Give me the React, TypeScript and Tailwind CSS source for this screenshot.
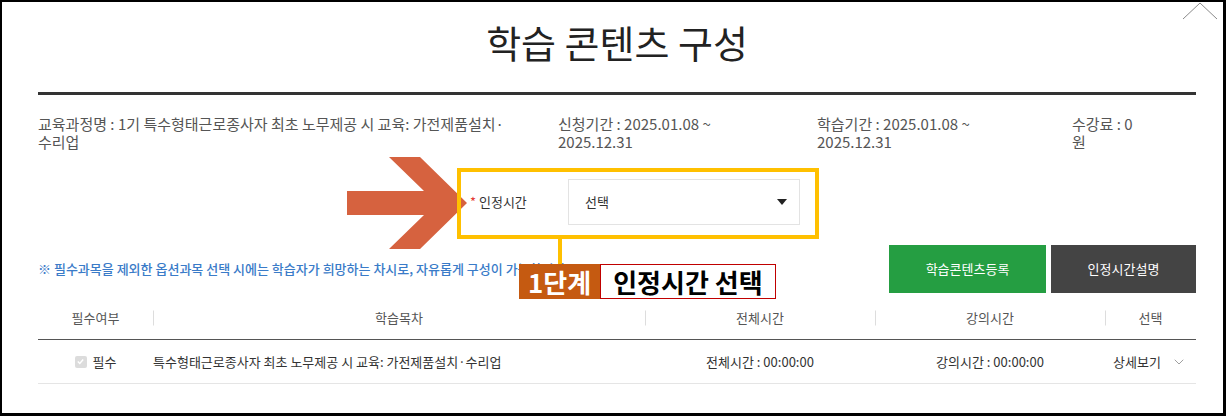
import { ChevronDown } from 'lucide-react';

const columns = [
  { label: '필수여부', width: 'w-[115px]' },
  { label: '학습목차', width: 'w-[492px]' },
  { label: '전체시간', width: 'w-[230px]' },
  { label: '강의시간', width: 'w-[230px]' },
  { label: '선택', width: 'flex-1' },
];

function Annotation() {
  return (
    <>
      {/* arrow */}
      <svg className="absolute left-[343px] top-[153px]" width="126" height="96" viewBox="343 153 126 96">
        <polygon
          points="345,189 422,189 387,155 418,155 465,201 418,247 387,247 422,213 345,213"
          fill="#d6623f"
        />
      </svg>
      {/* highlight box */}
      <div className="absolute left-[455px] top-[166px] w-[362px] h-[71px] border-[4px] border-[#ffc000]" />
      <div className="absolute left-[556px] top-[237px] w-[4px] h-[25px] bg-[#ffc000]" />
      {/* step label */}
      <div className="absolute left-[517px] top-[262px] flex h-[35px] font-bold text-[26px] leading-none">
        <div className="flex items-center bg-[#c55a11] px-[9px] text-white">1단계</div>
        <div className="flex items-center border border-[#c00000] bg-white px-[12px] text-black">인정시간 선택</div>
      </div>
    </>
  );
}

export default function App() {
  return (
    <div
      className="relative w-[1226px] h-[416px] overflow-hidden bg-white border-l-2 border-t-2 border-r-[3px] border-b-[3px] border-black"
      style={{ fontFamily: '"Noto Sans CJK KR", "Noto Sans", sans-serif' }}
    >
      {/* close icon, cut off */}
      <svg className="absolute right-[3px] top-0" width="40" height="20" viewBox="0 0 40 20">
        <polyline points="3,17 20,1 37,17" fill="none" stroke="#8a8a8a" strokeWidth="1" />
      </svg>

      <div className="pl-[36px] pr-[27px]">
        <h1 className="pt-[15px] text-center text-[38px] leading-[50px] font-normal text-[#222]">학습 콘텐츠 구성</h1>
        <div className="mt-[25px] h-[3px] bg-[#333]" />

        {/* course info */}
        <div className="mt-[20px] flex text-[15px] leading-[18px] text-[#555]">
          <div className="w-[520px] pr-[48px]">교육과정명 : 1기 특수형태근로종사자 최초 노무제공 시 교육: 가전제품설치·수리업</div>
          <div className="w-[259px] pr-[40px]">신청기간 : 2025.01.08 ~ 2025.12.31</div>
          <div className="w-[255px] pr-[40px]">학습기간 : 2025.01.08 ~ 2025.12.31</div>
          <div className="w-[72px]">수강료 : 0 원</div>
        </div>

        {/* select */}
        <div className="mt-[28px] flex items-center pl-[432px]">
          <div className="w-[98px] text-[13px] text-[#333]">
            <span className="text-[#e53935]">*</span> 인정시간
          </div>
          <div className="flex h-[46px] w-[232px] items-center justify-between border border-[#e3e3e3] pl-[16px] pr-[12px] text-[13px] text-[#333]">
            <span>선택</span>
            <svg width="10" height="6" viewBox="0 0 10 6">
              <polygon points="0,0 10,0 5,6" fill="#222" />
            </svg>
          </div>
        </div>

        {/* notice + buttons */}
        <div className="mt-[20px] flex items-center justify-between">
          <p className="text-[13px] font-medium text-[#3a7bc8]">
            ※ 필수과목을 제외한 옵션과목 선택 시에는 학습자가 희망하는 차시로, 자유롭게 구성이 가능합니다.
          </p>
          <div className="flex gap-[5px]">
            <button className="h-[48px] w-[157px] bg-[#259e42] text-[13px] text-white">학습콘텐츠등록</button>
            <button className="h-[48px] w-[145px] bg-[#444] text-[13px] text-white">인정시간설명</button>
          </div>
        </div>

        {/* table */}
        <div className="mt-[4px]">
          <div className="flex h-[43px] items-center border-b border-[#555] text-[13px] text-[#555]">
            {columns.map((c, i) => (
              <div key={c.label} className={`${c.width} relative text-center`}>
                {i > 0 && <span className="absolute left-0 top-1/2 h-[15px] w-px -translate-y-1/2 bg-[#ddd]" />}
                {c.label}
              </div>
            ))}
          </div>
          <div className="flex h-[44px] items-center border-b border-[#e5e5e5] text-[13px] text-[#333]">
            <div className="flex w-[115px] items-center justify-center gap-[6px]">
              <span className="flex h-[12px] w-[12px] items-center justify-center rounded-[2px] bg-[#dcdcdc]">
                <svg width="9" height="9" viewBox="0 0 10 10">
                  <polyline points="2,5 4.2,7.2 8,2.8" fill="none" stroke="#fff" strokeWidth="1.6" />
                </svg>
              </span>
              필수
            </div>
            <div className="w-[492px]">특수형태근로종사자 최초 노무제공 시 교육: 가전제품설치·수리업</div>
            <div className="w-[230px] text-center">전체시간 : 00:00:00</div>
            <div className="w-[230px] text-center">강의시간 : 00:00:00</div>
            <div className="flex flex-1 items-center gap-[10px] pl-[8px]">
              상세보기
              <ChevronDown size={16} strokeWidth={1.2} className="text-[#888]" />
            </div>
          </div>
        </div>
      </div>

      <Annotation />
    </div>
  );
}
